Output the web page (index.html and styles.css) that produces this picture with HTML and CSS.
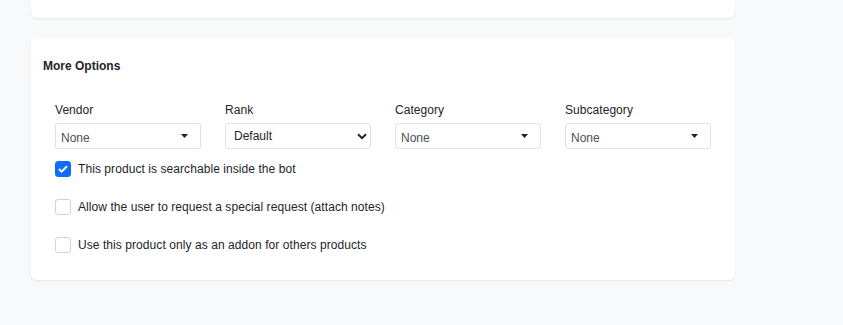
FILE: index.html
```html
<!DOCTYPE html>
<html lang="en">

<head>
  <meta charset="UTF-8" />
  <meta name="viewport" content="width=device-width, initial-scale=1.0">
  <title>Product - More Options</title>
  <link rel="stylesheet" href="styles.css">
</head>

<body>
  <div class="card card-top"></div>

  <div class="card options">
    <h5 class="card-title">More Options</h5>

    <div class="row">
      <div class="col">
        <label class="field-label">Vendor</label>
        <div class="select">
          <span>None</span>
          <svg class="caret" width="7" height="4" viewBox="0 0 7 4"><path d="M0 0h7L3.5 4z" fill="#222" /></svg>
        </div>
      </div>
      <div class="col">
        <label class="field-label">Rank</label>
        <div class="select native">
          <span>Default</span>
          <svg class="chevron" width="10" height="7" viewBox="0 0 10 7"><path d="M1 1.2l4 4 4-4" fill="none" stroke="#222" stroke-width="2" /></svg>
        </div>
      </div>
      <div class="col">
        <label class="field-label">Category</label>
        <div class="select">
          <span>None</span>
          <svg class="caret" width="7" height="4" viewBox="0 0 7 4"><path d="M0 0h7L3.5 4z" fill="#222" /></svg>
        </div>
      </div>
      <div class="col">
        <label class="field-label">Subcategory</label>
        <div class="select">
          <span>None</span>
          <svg class="caret" width="7" height="4" viewBox="0 0 7 4"><path d="M0 0h7L3.5 4z" fill="#222" /></svg>
        </div>
      </div>
    </div>

    <div class="checks">
      <label class="check">
        <span class="box checked">
          <svg width="10" height="8" viewBox="0 0 10 8"><path d="M1 4l2.6 2.6L9 1.2" fill="none" stroke="#fff" stroke-width="2" /></svg>
        </span>
        This product is searchable inside the bot
      </label>
      <label class="check">
        <span class="box"></span>
        Allow the user to request a special request (attach notes)
      </label>
      <label class="check">
        <span class="box"></span>
        Use this product only as an addon for others products
      </label>
    </div>
  </div>
</body>

</html>
```

FILE: styles.css
```css
* {
  box-sizing: border-box;
  margin: 0;
  padding: 0;
}

body {
  font-family: 'Liberation Sans', Arial, sans-serif;
  font-size: 12px;
  color: #212529;
  background: #f8f9fb;
  width: 843px;
  min-height: 325px;
}

.card {
  background: #fff;
  border-radius: 6px;
  box-shadow: 0 1px 2px rgba(0, 0, 0, 0.08);
  margin-left: 31px;
  width: 704px;
}

.card-top {
  height: 18px;
  border-top-left-radius: 0;
  border-top-right-radius: 0;
}

.options {
  margin-top: 20px;
  padding: 19px 12px 27px;
}

.card-title {
  font-size: 12px;
  font-weight: 700;
  line-height: 18px;
  color: #212529;
}

.row {
  display: grid;
  grid-template-columns: repeat(4, 1fr);
  margin-top: 26px;
}

.col {
  padding: 0 12px;
}

.field-label {
  display: block;
  line-height: 18px;
  margin-bottom: 4px;
  color: #212529;
  letter-spacing: 0.05px;
}

.select {
  height: 26px;
  border: 1px solid #dee2e6;
  border-radius: 3px;
  display: flex;
  align-items: center;
  justify-content: space-between;
  padding: 3px 12px 0 5px;
  color: #495057;
}

.select .caret {
  margin-top: -3px;
}

.select.native {
  padding: 0 3px 0 8px;
  color: #212529;
}

.select.native .chevron {
  margin-top: 1px;
}

.checks {
  display: flex;
  flex-direction: column;
  gap: 22px;
  margin-top: 12px;
  padding-left: 12px;
}

.check {
  display: flex;
  align-items: center;
  gap: 7px;
  height: 16px;
  color: #212529;
  letter-spacing: 0.07px;
}

.box {
  width: 16px;
  height: 16px;
  border: 1px solid #cfd4da;
  border-radius: 3px;
  display: flex;
  align-items: center;
  justify-content: center;
  background: #fff;
}

.box.checked {
  background: #0d6efd;
  border-color: #0d6efd;
}
```
